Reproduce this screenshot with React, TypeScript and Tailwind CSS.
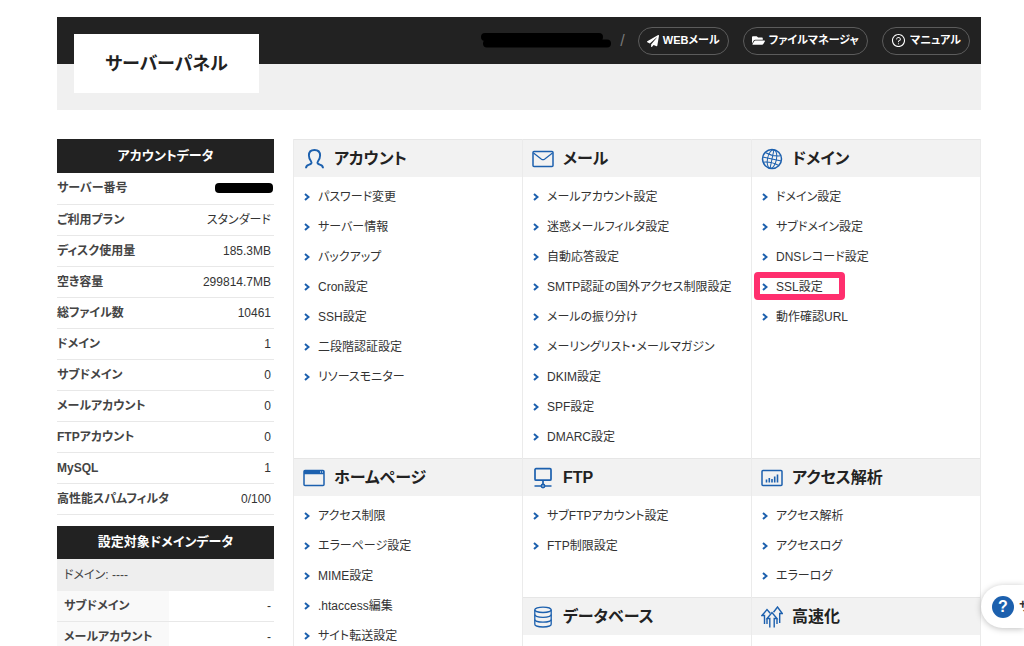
import React from 'react';
import { FaFolderOpen, FaPaperPlane } from 'react-icons/fa';
import { AiOutlineQuestionCircle } from 'react-icons/ai';

const iconProps = {
    width: 22,
    height: 22,
    viewBox: '0 0 22 22',
    fill: 'none',
    stroke: 'currentColor',
    strokeWidth: 1.5,
    'aria-hidden': true,
};

const UserIcon = () => (
    <svg {...iconProps} strokeWidth={1.9}>
        <path d="M3 20.2C3 18 3.800 17.300 5.600 16.800C8.500 16 9.200 15 8 13.300C6.700 11.500 5.900 10 5.900 7.500C5.900 4 8 2 11.500 2S17.100 4 17.100 7.500C17.100 10 16.300 11.500 15 13.300C13.800 15 14.500 16 17.400 16.800C19.200 17.300 20 18 20 20.200" />
    </svg>
);

const MailIcon = () => (
    <svg {...iconProps}>
        <rect x="1" y="3.5" width="20" height="15" rx="1" />
        <path d="M1.5 5l8 6.200q1.500 1 3 0l8-6.200" strokeWidth="1.2" />
    </svg>
);

const GlobeIcon = () => (
    <svg {...iconProps} strokeWidth={1}>
        <circle cx="11" cy="11" r="9.5" strokeWidth="1.5" />
        <g transform="rotate(12 11 11)">
            <ellipse cx="11" cy="11" rx="4.5" ry="9.5" />
            <path d="M11 1.5v19M1.5 11h19M3 6q8 2.500 16 0M3 16q8-2.500 16 0" />
        </g>
    </svg>
);

const WindowIcon = () => (
    <svg {...iconProps}>
        <rect x="1" y="3.5" width="20" height="15" rx="1" />
        <path d="M1 5.5h20" strokeWidth="3.5" />
        <path d="M17 5h1M19 5h1" stroke="#fff" strokeWidth="1" />
    </svg>
);

const FtpIcon = () => (
    <svg {...iconProps} strokeWidth={1.7}>
        <rect x="3" y="1.7" width="16" height="11.5" rx="1" />
        <path d="M11 13v4M2.500 19h6.500M13 19h6.500" />
        <circle cx="11" cy="19" r="1.6" />
    </svg>
);

const DatabaseIcon = () => (
    <svg {...iconProps} strokeWidth={1.3}>
        <ellipse cx="11" cy="3.8" rx="8.2" ry="2.7" />
        <path d="M2.800 3.800v14.500c0 1.500 3.700 2.700 8.200 2.700s8.200-1.200 8.200-2.700V3.800" />
        <path d="M2.800 8.600c0 1.500 3.700 2.700 8.200 2.700s8.200-1.200 8.200-2.700M2.800 13.500c0 1.500 3.700 2.700 8.200 2.700s8.200-1.200 8.200-2.700" />
    </svg>
);

const ChartIcon = () => (
    <svg {...iconProps}>
        <rect x="1" y="3.5" width="20" height="15" rx="1" />
        <path d="M5.500 15.500v-3M8.300 15.500v-4.500M11 15.500v-3.500M13.700 15.500v-6M16.500 15.500v-8" strokeWidth="1.6" />
    </svg>
);

const SpeedIcon = () => (
    <svg {...iconProps} strokeWidth={1.4}>
        <path d="M8.800 21.500V12.500H6L11 6.500l5 6h-2.800v9" />
        <path d="M3.500 18V9.500H1l5-6 3.200 3.700" />
        <path d="M12.500 6.200L16.500 1l4.800 6.500h-2.600V17" />
        <path d="M6 13v5M16 13v5" />
    </svg>
);

type Section = {
    title: string;
    Icon: React.ComponentType;
    links: string[];
    tall?: boolean;
};

const sections: Section[] = [
    {
        title: 'アカウント',
        Icon: UserIcon,
        links: ['パスワード変更', 'サーバー情報', 'バックアップ', 'Cron設定', 'SSH設定', '二段階認証設定', 'リソースモニター'],
    },
    {
        title: 'メール',
        Icon: MailIcon,
        links: [
            'メールアカウント設定',
            '迷惑メールフィルタ設定',
            '自動応答設定',
            'SMTP認証の国外アクセス制限設定',
            'メールの振り分け',
            'メーリングリスト・メールマガジン',
            'DKIM設定',
            'SPF設定',
            'DMARC設定',
        ],
    },
    {
        title: 'ドメイン',
        Icon: GlobeIcon,
        links: ['ドメイン設定', 'サブドメイン設定', 'DNSレコード設定', 'SSL設定', '動作確認URL'],
    },
    {
        title: 'ホームページ',
        Icon: WindowIcon,
        links: ['アクセス制限', 'エラーページ設定', 'MIME設定', '.htaccess編集', 'サイト転送設定'],
        tall: true,
    },
    { title: 'FTP', Icon: FtpIcon, links: ['サブFTPアカウント設定', 'FTP制限設定'] },
    { title: 'アクセス解析', Icon: ChartIcon, links: ['アクセス解析', 'アクセスログ', 'エラーログ'] },
    { title: 'データベース', Icon: DatabaseIcon, links: [] },
    { title: '高速化', Icon: SpeedIcon, links: [] },
];

const accountRows = [
    ['サーバー番号', ''],
    ['ご利用プラン', 'スタンダード'],
    ['ディスク使用量', '185.3MB'],
    ['空き容量', '299814.7MB'],
    ['総ファイル数', '10461'],
    ['ドメイン', '1'],
    ['サブドメイン', '0'],
    ['メールアカウント', '0'],
    ['FTPアカウント', '0'],
    ['MySQL', '1'],
    ['高性能スパムフィルタ', '0/100'],
];

const domainRows = [
    ['サブドメイン', '-'],
    ['メールアカウント', '-'],
];

const HeaderLink = ({ icon, label }: { icon: React.ReactNode; label: string }) => (
    <a
        href="#"
        className="flex h-7 items-center gap-1 rounded-full border border-[#5c5c5c] px-2 text-[11px] font-bold whitespace-nowrap text-white"
    >
        {icon}
        {label}
    </a>
);

const MenuSection = ({ title, Icon, links, tall }: Section) => (
    <section className={tall ? 'row-span-2 border-r border-[#ebebeb]' : 'border-r border-[#ebebeb]'}>
        <h2 className="flex h-[38px] items-center gap-[9px] border-t border-[#e6e6e6] bg-[#f2f2f2] px-[9px] text-base font-bold text-[#222]">
            <span className="text-[#1c60ae]">
                <Icon />
            </span>
            {title}
        </h2>
        <ul className="pt-[5px] pb-[6px] pl-[10px]">
            {links.map((link) => (
                <li key={link} className="relative flex h-[30px] items-center">
                    <a href="#" className="flex items-center gap-2 text-xs whitespace-nowrap text-[#333]">
                        <svg width="6" height="8" viewBox="0 0 6 8" fill="none" stroke="#1c60ae" strokeWidth="2" aria-hidden="true">
                            <path d="M1 1l3.500 3L1 7" />
                        </svg>
                        {link}
                    </a>
                    {link === 'SSL設定' && (
                        <span className="pointer-events-none absolute top-0 -left-2 h-7 w-[91px] rounded-sm border-6 border-[#ff2f6e]" />
                    )}
                </li>
            ))}
        </ul>
    </section>
);

const App = () => {
    return (
        <div
            lang="ja"
            className="relative h-screen overflow-hidden bg-white pt-[17px] pr-[43px] pl-[57px] font-['Liberation_Sans','Noto_Sans_CJK_JP',sans-serif] text-xs text-[#333] [font-feature-settings:'palt']"
        >
            <header className="relative bg-[#f0f0f0] pb-[46px]">
                <div className="flex h-[47px] items-center justify-end bg-[#222] pr-[11px]">
                    <svg width="134" height="18" viewBox="0 0 134 18" aria-hidden="true">
                        <path d="M6 5h114M8 11.500h120" stroke="#000" strokeWidth="8" strokeLinecap="round" />
                    </svg>
                    <span className="mr-[13px] ml-[7px] text-base text-[#777]">/</span>
                    <nav className="flex gap-[14px]">
                        <HeaderLink icon={<FaPaperPlane size={12} />} label="WEBメール" />
                        <HeaderLink icon={<FaFolderOpen size={13} />} label="ファイルマネージャ" />
                        <HeaderLink icon={<AiOutlineQuestionCircle size={15} />} label="マニュアル" />
                    </nav>
                </div>
                <h1 className="absolute top-[17px] left-[17px] flex h-[59px] w-[185px] items-center justify-center bg-white text-lg font-bold text-[#222]">
                    サーバーパネル
                </h1>
            </header>

            <div className="mt-[29px] flex items-start gap-[19px]">
                <aside className="w-[217px] shrink-0">
                    <h2 className="flex h-[34px] items-center justify-center bg-[#222] text-[13px] font-bold text-white">
                        アカウントデータ
                    </h2>
                    <table className="w-full">
                        <tbody>
                            {accountRows.map(([name, value]) => (
                                <tr key={name} className="h-[31px] border-b border-[#e8e8e8]">
                                    <th scope="row" className="text-left font-bold whitespace-nowrap text-[#444]">{name}</th>
                                    <td className="pr-[3px] text-right">
                                        {value || <span className="-mr-[2px] ml-auto block h-[10px] w-[58px] rounded-sm bg-black" />}
                                    </td>
                                </tr>
                            ))}
                        </tbody>
                    </table>

                    <h2 className="mt-[11px] flex h-[33px] items-center justify-center bg-[#222] text-[13px] font-bold text-white">
                        設定対象ドメインデータ
                    </h2>
                    <p className="flex h-8 items-center bg-[#eee] px-[7px] text-[#444]">ドメイン: ----</p>
                    <table className="w-full">
                        <tbody>
                            {domainRows.map(([name, value]) => (
                                <tr key={name} className="h-[31px] border-b border-[#e8e8e8]">
                                    <th scope="row" className="w-[112px] bg-[#f9f9f9] pl-[7px] text-left font-bold whitespace-nowrap text-[#444]">
                                        {name}
                                    </th>
                                    <td className="pr-[3px] text-right">{value}</td>
                                </tr>
                            ))}
                        </tbody>
                    </table>
                </aside>

                <main className="grid flex-1 grid-cols-3 grid-rows-[auto_auto_1fr] border-l border-[#ebebeb]">
                    {sections.map((section) => (
                        <MenuSection key={section.title} {...section} />
                    ))}
                </main>
            </div>

            <button
                type="button"
                className="absolute right-0 bottom-[18px] flex h-[43px] w-[43px] items-center gap-[5px] rounded-l-full bg-white pl-[11px] font-bold shadow-[0_1px_6px_rgba(0,0,0,0.25)]"
            >
                <span className="flex size-[22px] shrink-0 items-center justify-center rounded-full bg-[#1c60ae] text-base text-white">?</span>
                サ
            </button>
        </div>
    );
};

export default App;
